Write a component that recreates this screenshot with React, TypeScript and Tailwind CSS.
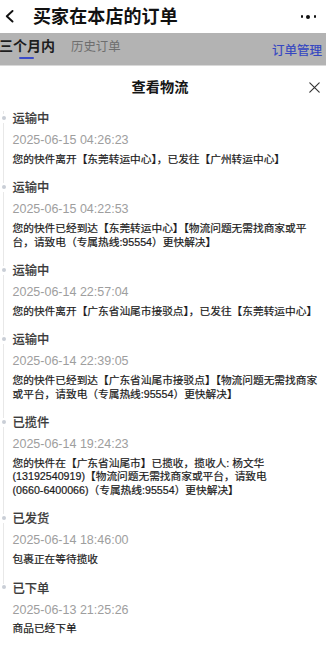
import React from "react";

type Item = { status: string; time: string; lines: string[] };

const items: Item[] = [
  {
    status: "运输中",
    time: "2025-06-15 04:26:23",
    lines: ["您的快件离开【东莞转运中心】，已发往【广州转运中心】"],
  },
  {
    status: "运输中",
    time: "2025-06-15 04:22:53",
    lines: [
      "您的快件已经到达【东莞转运中心】【物流问题无需找商家或平",
      "台，请致电（专属热线:95554）更快解决】",
    ],
  },
  {
    status: "运输中",
    time: "2025-06-14 22:57:04",
    lines: ["您的快件离开【广东省汕尾市接驳点】，已发往【东莞转运中心】"],
  },
  {
    status: "运输中",
    time: "2025-06-14 22:39:05",
    lines: [
      "您的快件已经到达【广东省汕尾市接驳点】【物流问题无需找商家",
      "或平台，请致电（专属热线:95554）更快解决】",
    ],
  },
  {
    status: "已揽件",
    time: "2025-06-14 19:24:23",
    lines: [
      "您的快件在【广东省汕尾市】已揽收，揽收人: 杨文华",
      "(13192540919)【物流问题无需找商家或平台，请致电",
      "(0660-6400066)（专属热线:95554）更快解决】",
    ],
  },
  {
    status: "已发货",
    time: "2025-06-14 18:46:00",
    lines: ["包裹正在等待揽收"],
  },
  {
    status: "已下单",
    time: "2025-06-13 21:25:26",
    lines: ["商品已经下单"],
  },
];

const font = '"Liberation Sans", "Noto Sans CJK SC", sans-serif';

export default function App() {
  return (
    <div
      className="w-[326px] h-[647px] overflow-hidden bg-white flex flex-col"
      style={{ fontFamily: font }}
    >
      {/* Top navigation */}
      <div className="h-[33px] flex items-center bg-white shrink-0">
        <svg
          className="ml-[5px] shrink-0"
          width="9"
          height="13"
          viewBox="0 0 9 13"
          fill="none"
        >
          <polyline
            points="7.5,1 1.8,6.2 7.5,11.5"
            stroke="#111"
            strokeWidth="1.9"
            strokeLinecap="round"
            strokeLinejoin="round"
          />
        </svg>
        <div className="ml-[19px] text-[18px] leading-none font-bold text-[#111] tracking-[0.1px]">
          买家在本店的订单
        </div>
        <div className="ml-auto mr-[10px] flex items-center">
          <span className="w-[2.5px] h-[2.5px] rounded-full bg-[#111]" />
          <span className="ml-[3px] w-[4px] h-[4px] rounded-full bg-[#111]" />
          <span className="ml-[3.5px] w-[2.5px] h-[2.5px] rounded-full bg-[#111]" />
        </div>
      </div>

      {/* Dimmed tab bar */}
      <div className="h-[32px] bg-[#b3b3b3] flex items-start shrink-0 relative">
        <div className="flex flex-col pt-[5px]">
          <span className="text-[14px] leading-[16px] font-bold text-[#1e1e1e] -ml-[1px]">
            三个月内
          </span>
          <span className="mt-[2.5px] ml-[19px] w-[15px] h-[2px] rounded-full bg-[#3a4bc9]" />
        </div>
        <span className="ml-[16px] pt-[6px] text-[12.4px] leading-[16px] text-[#6e6e6e]">
          历史订单
        </span>
        <span className="ml-auto mr-[4px] self-center mt-[3px] text-[12.5px] leading-[16px] text-[#3446c2] [-webkit-text-stroke:0.2px_#3446c2]">
          订单管理
        </span>
      </div>

      {/* Sheet */}
      <div className="flex-1 bg-white flex flex-col border-t border-[#d9d9d9]">
        <div className="h-[43px] grid grid-cols-[1fr_auto_1fr] items-center pr-[6px] shrink-0">
          <span />
          <span className="text-[14.2px] leading-none font-bold text-[#151515]">
            查看物流
          </span>
          <span className="flex justify-end">
            <svg width="11" height="11" viewBox="0 0 11 11" fill="none">
              <path
                d="M0.8 0.8 L10.2 10.2 M10.2 0.8 L0.8 10.2"
                stroke="#333"
                strokeWidth="1.15"
                strokeLinecap="round"
              />
            </svg>
          </span>
        </div>

        <div className="flex flex-col pt-[2px]">
          {items.map((it, i) => {
            const last = i === items.length - 1;
            return (
              <div key={i} className="flex">
                <div className="w-[5px] ml-px flex flex-col items-center shrink-0">
                  <span className="w-px h-[3px] bg-[#e8e8e8]" />
                  <span className="mt-[1.5px] w-[4px] h-[4px] rounded-full bg-[#c9ced6]" />
                  {!last && <span className="mt-[3px] w-px flex-1 bg-[#e8e8e8]" />}
                </div>
                <div className="ml-[6.5px] flex flex-col pb-[14px]">
                  <span className="text-[12.3px] leading-[16px] font-medium text-[#3c3c3c] [-webkit-text-stroke:0.15px_#3c3c3c]">
                    {it.status}
                  </span>
                  <span className="mt-[6px] text-[12.5px] leading-[15px] text-[#9e9e9e]">
                    {it.time}
                  </span>
                  <div className="mt-[4.75px] text-[10.7px] leading-[13.5px] text-[#1b1b1b] [-webkit-text-stroke:0.2px_#1b1b1b]">
                    {it.lines.map((l, j) => (
                      <span key={j} className="block whitespace-nowrap">
                        {l}
                      </span>
                    ))}
                  </div>
                </div>
              </div>
            );
          })}
        </div>
      </div>
    </div>
  );
}
